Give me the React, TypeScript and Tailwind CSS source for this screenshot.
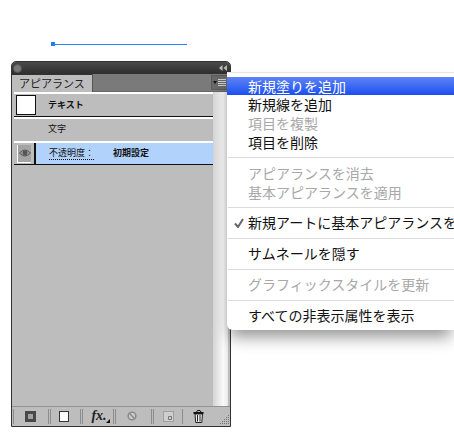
const FONT = "font-['Hiragino_Kaku_Gothic_Pro','Noto_Sans_CJK_JP',sans-serif]"

function Sep({ className }: { className: string }) {
  return <div className={`h-px bg-[#dcdcdc] ml-[1px] ${className}`} />
}

function Item({ label, disabled, checked, active }: { label: string; disabled?: boolean; checked?: boolean; active?: boolean }) {
  return (
    <div
      className={`relative pl-[21px] text-[14px] whitespace-nowrap ${
        active
          ? 'h-[18px] leading-[18px] bg-gradient-to-b from-[#5f82f5] to-[#1a4df0] text-white'
          : disabled
            ? 'h-[19px] leading-[19px] text-[#a8a8a8]'
            : 'h-[19px] leading-[19px] text-[#111]'
      }`}
    >
      {checked && (
        <svg className="absolute left-[7px] top-[5px]" width="10" height="10" viewBox="0 0 10 10">
          <path d="M1 5.5 L4 9 L9 1" fill="none" stroke="#666" strokeWidth="2" />
        </svg>
      )}
      {label}
    </div>
  )
}

function Menu() {
  return (
    <div className="absolute left-[216px] top-[11px] w-[227px] h-[258px] bg-white rounded-bl-[6px] border-t border-[#e6e6e6] shadow-[0_10px_16px_-3px_rgba(0,0,0,0.42)] pt-[4px] overflow-hidden">
      <Item label="新規塗りを追加" active />
      <Item label="新規線を追加" />
      <Item label="項目を複製" disabled />
      <Item label="項目を削除" />
      <Sep className="mt-[5px] mb-[6px]" />
      <Item label="アピアランスを消去" disabled />
      <Item label="基本アピアランスを適用" disabled />
      <Sep className="mt-[5px] mb-[5px]" />
      <Item label="新規アートに基本アピアランスを" checked />
      <Sep className="mt-[6px] mb-[5px]" />
      <Item label="サムネールを隠す" />
      <Sep className="mt-[6px] mb-[5px]" />
      <Item label="グラフィックスタイルを更新" disabled />
      <Sep className="mt-[6px] mb-[5px]" />
      <Item label="すべての非表示属性を表示" />
    </div>
  )
}

function Divider({ single }: { single?: boolean }) {
  return (
    <div className={`h-[15px] shrink-0 ${single ? 'w-[3px] border-l border-[#8c8c8c]' : 'w-[3px] border-x border-x-[#8c8c8c]'}`} />
  )
}

function Footer() {
  return (
    <div className="h-[20px] shrink-0 border-t border-[#929292] flex items-center pl-[1px] pb-[1px] bg-[#bdbdbd]">
      <Divider single />
      <div className="w-[32px] pr-[4px] flex justify-center">
        <div className="w-[11px] h-[11px] bg-[#484848] flex items-center justify-center">
          <div className="w-[5px] h-[5px] bg-[#a0a0a0]" />
        </div>
      </div>
      <Divider />
      <div className="w-[29px] pr-[3px] flex justify-center">
        <div className="w-[10px] h-[11px] bg-white border border-[#333]" />
      </div>
      <Divider />
      <div className="relative w-[30px] pl-[2px] text-center text-[14px] leading-[14px] font-bold italic text-[#222] font-['Liberation_Serif',serif]">
        fx.
        <svg className="absolute right-[3px] bottom-[0px]" width="4" height="4" viewBox="0 0 4 4">
          <path d="M4 0 V4 H0 Z" fill="#111" />
        </svg>
      </div>
      <Divider />
      <div className="w-[35px] pr-[4px] flex justify-center">
        <svg width="10" height="10" viewBox="0 0 10 10">
          <circle cx="5" cy="5" r="3.8" fill="#d0d0d0" stroke="#8a8a8a" strokeWidth="1.6" />
          <path d="M2.5 2.5 L7.5 7.5" stroke="#8a8a8a" strokeWidth="1.6" />
        </svg>
      </div>
      <Divider />
      <div className="w-[28px] flex justify-center">
        <svg width="11" height="11" viewBox="0 0 11 11">
          <rect x="0.5" y="0.5" width="10" height="10" fill="#cfcfcf" stroke="#a0a0a0" />
          <path d="M5.5 5.5 H8.5 V8.5 H5.5 Z" fill="none" stroke="#777" />
        </svg>
      </div>
      <Divider single />
      <div className="w-[27px] flex justify-center">
        <svg width="11" height="13" viewBox="0 0 11 13">
          <path d="M0.5 3 H10.5" stroke="#111" strokeWidth="2" />
          <path d="M3.5 2 L4.5 0.5 H7 L8 2" stroke="#111" fill="none" />
          <path d="M2 4 H9.5 L8.8 12.5 H2.7 Z" fill="#eee" stroke="#222" />
          <path d="M4.5 5 V11.5 M7 5 V11.5" stroke="#222" />
        </svg>
      </div>
      <svg className="ml-auto self-end" width="11" height="11" viewBox="0 0 11 11" fill="#777">
        <rect x="9" y="1" width="1" height="1" />
        <rect x="7" y="3" width="1" height="1" /><rect x="9" y="3" width="1" height="1" />
        <rect x="5" y="5" width="1" height="1" /><rect x="7" y="5" width="1" height="1" /><rect x="9" y="5" width="1" height="1" />
        <rect x="3" y="7" width="1" height="1" /><rect x="5" y="7" width="1" height="1" /><rect x="7" y="7" width="1" height="1" /><rect x="9" y="7" width="1" height="1" />
        <rect x="1" y="9" width="1" height="1" /><rect x="3" y="9" width="1" height="1" /><rect x="5" y="9" width="1" height="1" /><rect x="7" y="9" width="1" height="1" /><rect x="9" y="9" width="1" height="1" />
      </svg>
    </div>
  )
}

function Panel() {
  return (
    <div className="relative w-[220px] h-[366px] mt-[15px] bg-[#bdbdbd] border border-[#333] rounded-t-[5px] flex flex-col text-[#111]">
      {/* title bar */}
      <div className="h-[12px] shrink-0 rounded-t-[4px] bg-gradient-to-b from-[#4a4a4a] to-[#2e2e2e] flex items-center justify-between pl-[1px] pr-[3px]">
        <div className="w-[9px] h-[9px] rounded-full bg-[#777] border border-[#555]" />
        <svg width="8" height="6" viewBox="0 0 8 6" fill="#bbb">
          <path d="M3.5 0 V6 L0 3 Z M8 0 V6 L4.5 3 Z" />
        </svg>
      </div>
      {/* tabs */}
      <div className="h-[18px] shrink-0 flex bg-[#7a7a7a]">
        <div className="w-[80px] pl-[7px] text-[11px] leading-[17px] bg-[#bdbdbd] text-[#222] border-t border-[#333]">アピアランス</div>
        <div className="flex-1 border-b border-[#666] border-l border-l-[#555] flex justify-end pr-[2px]">
          <div className="w-[17px] h-[15px] mt-[1px] bg-[#686868] border border-[#5a5a5a] flex items-center justify-center gap-[1px]">
            <div className="w-0 h-0 border-x-[2px] border-x-transparent border-t-[3px] border-t-[#111]" />
            <div className="flex flex-col gap-[1px]">
              <div className="w-[8px] h-px bg-[#ccc]" />
              <div className="w-[8px] h-px bg-[#ccc]" />
              <div className="w-[8px] h-px bg-[#ccc]" />
              <div className="w-[8px] h-px bg-[#ccc]" />
            </div>
          </div>
        </div>
      </div>
      {/* body */}
      <div className="flex-1 flex pl-[2px] pr-[2px] min-h-0">
        <div className="flex-1 min-w-0 flex flex-col text-[9px]">
          <div className="h-[25px] border-t-2 border-white border-b border-b-[#111] flex items-center pl-[2px]">
            <div className="w-[20px] h-[20px] bg-white border border-[#111]" />
            <div className="ml-[12px] font-bold">テキスト</div>
          </div>
          <div className="h-[24px] border-t-2 border-white flex items-center pl-[34px] pb-[2px]">文字</div>
          <div className="h-[24px] border-t-2 border-white border-b border-b-[#111] flex bg-[#b0d2fb]">
            <div className="w-[22px] shrink-0 bg-[#bdbdbd] border-r-2 border-[#111] flex items-center justify-center">
              <div className="w-[14px] h-[18px] bg-[#a4a4a4] border-l border-b border-white flex items-center justify-center">
                <svg width="12" height="8" viewBox="0 0 12 8">
                  <path d="M0.5 4 Q6 -2 11.5 4 Q6 10 0.5 4 Z" fill="#999" stroke="#555" />
                  <circle cx="6" cy="4" r="2.4" fill="#555" />
                </svg>
              </div>
            </div>
            <div className="ml-[13px] mt-[3px] h-[14px] border-b border-dotted border-[#111] leading-[13px]">不透明度：</div>
            <div className="ml-[19px] mt-[3px] font-bold leading-[13px]">初期設定</div>
          </div>
        </div>
        <div className="w-[15px] shrink-0 bg-gradient-to-r from-[#d4d4d4] via-[#fafafa] via-70% to-[#e8e8e8]" />
      </div>
      <Footer />
    </div>
  )
}

export default function App() {
  return (
    <div className={`relative w-[454px] h-[439px] overflow-hidden bg-white pt-[42px] pl-[11px] ${FONT}`}>
      <div className="ml-[40px] h-[4px] flex items-center">
        <div className="w-[4px] h-[4px] bg-[#1f7ff0]" />
        <div className="w-[132px] h-px bg-[#2a86f5]" />
      </div>
      <div className="relative">
        <Panel />
        <Menu />
      </div>
    </div>
  )
}
